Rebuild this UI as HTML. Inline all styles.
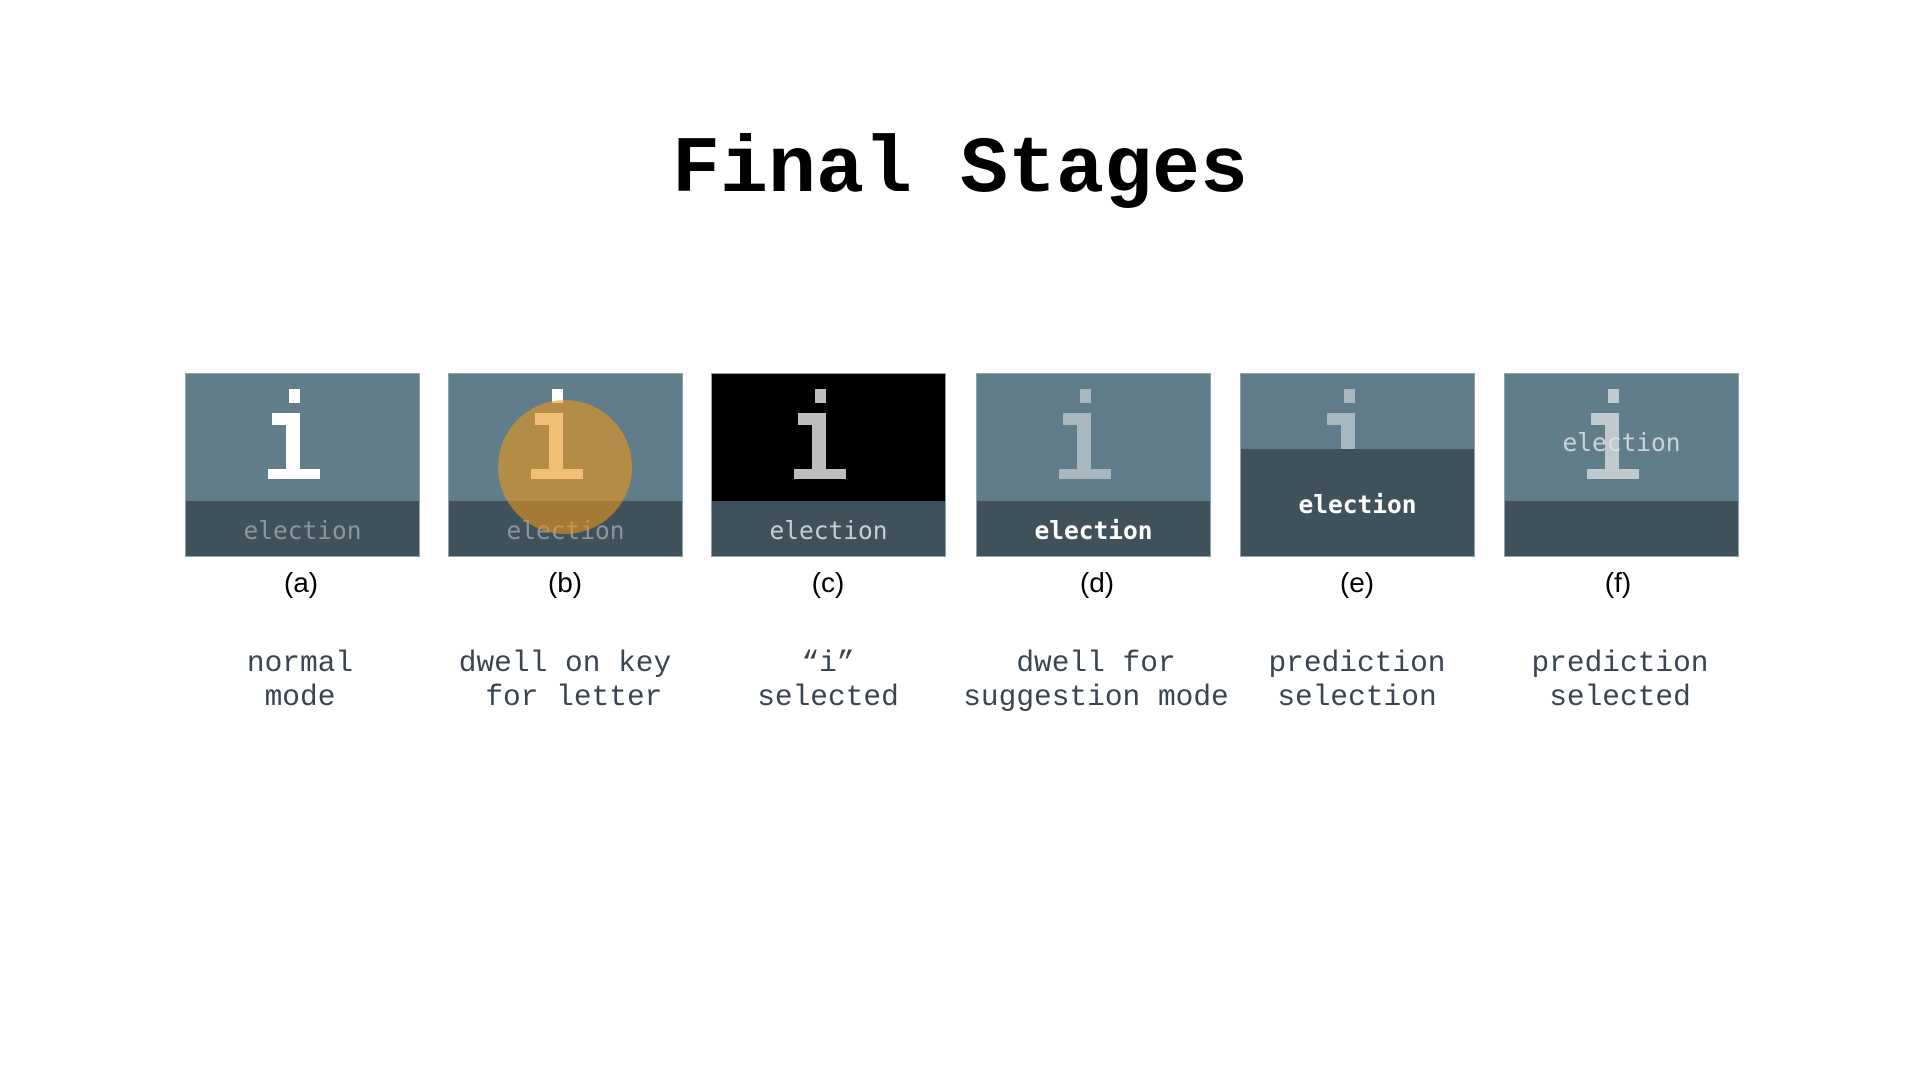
<!DOCTYPE html>
<html><head><meta charset="utf-8"><style>
body{margin:0;width:1920px;height:1080px;background:#fff;position:relative;overflow:hidden}
.t{position:absolute;left:0;width:1920px;text-align:center;top:125px;font:bold 80px "Liberation Mono",monospace;color:#000;letter-spacing:0}
.box{position:absolute;top:373px;width:235px;height:184px}
.box svg{display:block}
.lab{position:absolute;top:567px;width:200px;text-align:center;font:28px "Liberation Sans",sans-serif;color:#000}
.desc{position:absolute;top:646px;width:320px;text-align:center;font:29.5px/34px "Liberation Mono",monospace;color:#3a4550;white-space:pre}
</style></head><body>
<div class="t">Final Stages</div>

<div class="box" style="left:185px"><svg width="235" height="184">
<rect x="0.5" y="0.5" width="234" height="183" fill="#617d89" stroke="#8ea3ae"/>
<rect x="1" y="128" width="233" height="55" fill="#3f525c"/>
<g fill="#fff"><rect x="104" y="16" width="11" height="14"/><rect x="101" y="40" width="14" height="65"/><rect x="87" y="40" width="28" height="12"/><rect x="83" y="96" width="52" height="10"/></g>
<text x="117.5" y="166" text-anchor="middle" font-family="DejaVu Sans Mono" font-size="24.5" fill="#8a969c">election</text></svg></div>

<div class="box" style="left:448px"><svg width="235" height="184">
<rect x="0.5" y="0.5" width="234" height="183" fill="#617d89" stroke="#8ea3ae"/>
<rect x="1" y="128" width="233" height="55" fill="#3f525c"/>
<g fill="#fff"><rect x="104" y="16" width="11" height="14"/><rect x="101" y="40" width="14" height="65"/><rect x="87" y="40" width="28" height="12"/><rect x="83" y="96" width="52" height="10"/></g>
<text x="117.5" y="166" text-anchor="middle" font-family="DejaVu Sans Mono" font-size="24.5" fill="#8a969c">election</text>
<ellipse cx="117" cy="94" rx="67" ry="67" fill="rgb(233,150,25)" fill-opacity="0.6"/></svg></div>

<div class="box" style="left:711px"><svg width="235" height="184">
<rect x="0.5" y="0.5" width="234" height="183" fill="#000" stroke="#8ea3ae"/>
<rect x="1" y="128" width="233" height="55" fill="#3f525c"/>
<g fill="#bdbdbd"><rect x="104" y="16" width="11" height="14"/><rect x="101" y="40" width="14" height="65"/><rect x="87" y="40" width="28" height="12"/><rect x="83" y="96" width="52" height="10"/></g>
<text x="117.5" y="166" text-anchor="middle" font-family="DejaVu Sans Mono" font-size="24.5" fill="#c8cdd0">election</text></svg></div>

<div class="box" style="left:976px"><svg width="235" height="184">
<rect x="0.5" y="0.5" width="234" height="183" fill="#617d89" stroke="#8ea3ae"/>
<rect x="1" y="128" width="233" height="55" fill="#3f525c"/>
<g fill="#a8b6bd"><rect x="104" y="16" width="11" height="14"/><rect x="101" y="40" width="14" height="65"/><rect x="87" y="40" width="28" height="12"/><rect x="83" y="96" width="52" height="10"/></g>
<text x="117.5" y="166" text-anchor="middle" font-family="DejaVu Sans Mono" font-weight="bold" font-size="24.5" fill="#fff">election</text></svg></div>

<div class="box" style="left:1240px"><svg width="235" height="184">
<rect x="0.5" y="0.5" width="234" height="183" fill="#617d89" stroke="#8ea3ae"/>
<g fill="#a8b6bd"><rect x="104" y="16" width="11" height="14"/><rect x="101" y="40" width="14" height="65"/><rect x="87" y="40" width="28" height="12"/><rect x="83" y="96" width="52" height="10"/></g>
<rect x="1" y="76" width="233" height="107" fill="#3f525c"/>
<text x="117.5" y="140" text-anchor="middle" font-family="DejaVu Sans Mono" font-weight="bold" font-size="24.5" fill="#fff">election</text></svg></div>

<div class="box" style="left:1504px"><svg width="235" height="184">
<rect x="0.5" y="0.5" width="234" height="183" fill="#617d89" stroke="#8ea3ae"/>
<rect x="1" y="128" width="233" height="55" fill="#3f525c"/>
<g fill="#bfc9ce"><rect x="104" y="16" width="11" height="14"/><rect x="101" y="40" width="14" height="65"/><rect x="87" y="40" width="28" height="12"/><rect x="83" y="96" width="52" height="10"/></g>
<text x="117.5" y="78" text-anchor="middle" font-family="DejaVu Sans Mono" font-size="24.5" fill="#dde2e5" fill-opacity="0.85">election</text></svg></div>

<div class="lab" style="left:201px">(a)</div>
<div class="lab" style="left:465px">(b)</div>
<div class="lab" style="left:728px">(c)</div>
<div class="lab" style="left:997px">(d)</div>
<div class="lab" style="left:1257px">(e)</div>
<div class="lab" style="left:1518px">(f)</div>

<div class="desc" style="left:140px">normal
mode</div>
<div class="desc" style="left:405px">dwell on key
 for letter</div>
<div class="desc" style="left:668px">“i”
selected</div>
<div class="desc" style="left:936px">dwell for
suggestion mode</div>
<div class="desc" style="left:1197px">prediction
selection</div>
<div class="desc" style="left:1460px">prediction
selected</div>
</body></html>
